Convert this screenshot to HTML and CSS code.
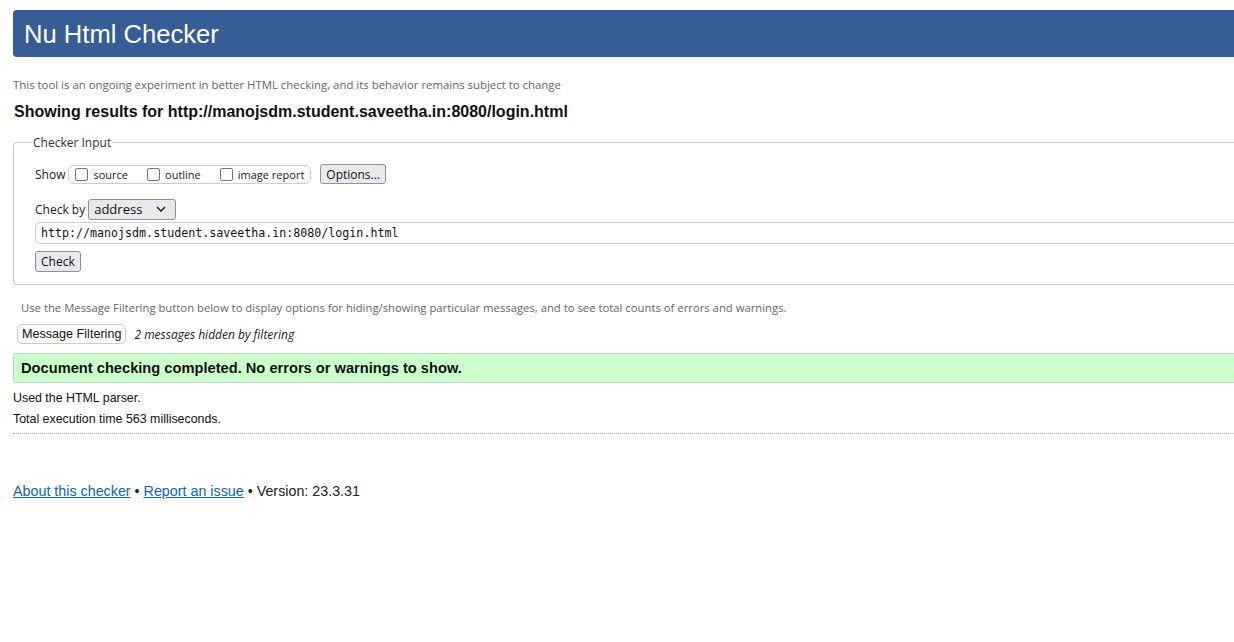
FILE: index.html
```html
<!DOCTYPE html>
<html lang="en">
<head>
<meta charset="utf-8">
<title>Nu Html Checker</title>
<link rel="stylesheet" href="styles.css">
</head>
<body>
<div class="page">
  <h1 class="header">Nu Html Checker</h1>
  <p class="intro">This tool is an ongoing experiment in better HTML checking, and its behavior remains subject to change</p>
  <h2 class="results">Showing results for http://manojsdm.student.saveetha.in:8080/login.html</h2>

  <fieldset class="input-set">
    <legend>Checker Input</legend>
    <div class="row show-row">
      <span class="label">Show</span>
      <span class="group">
        <label class="opt"><span class="cb"></span>source</label>
        <label class="opt"><span class="cb"></span>outline</label>
        <label class="opt"><span class="cb"></span>image report</label>
      </span>
      <span class="btn">Options...</span>
    </div>
    <div class="row checkby-row">
      <span class="label">Check by</span>
      <span class="select">address
        <svg class="chev" width="10" height="6" viewBox="0 0 10 6"><path d="M1 1 L5 5 L9 1" fill="none" stroke="#222" stroke-width="1.5"/></svg>
      </span>
    </div>
    <div class="url">http://manojsdm.student.saveetha.in:8080/login.html</div>
    <span class="btn check">Check</span>
  </fieldset>

  <p class="filter-note">Use the Message Filtering button below to display options for hiding/showing particular messages, and to see total counts of errors and warnings.</p>
  <div class="filter-row">
    <span class="filter-btn">Message Filtering</span>
    <em class="hidden-note">2 messages hidden by filtering</em>
  </div>

  <div class="success">Document checking completed. No errors or warnings to show.</div>
  <p class="stat first">Used the HTML parser.</p>
  <p class="stat">Total execution time 563 milliseconds.</p>
  <hr class="dots">

  <p class="footer"><a href="#">About this checker</a> • <a href="#">Report an issue</a> • Version: 23.3.31</p>
</div>
</body>
</html>
```
FILE: styles.css
```css
html { overflow: hidden; }
body {
  margin: 0;
  padding: 10px 0 0 13px;
  font-family: "Liberation Sans", Arial, sans-serif;
  color: #111;
  background: #fff;
}
.page { width: 1240px; }
.header {
  margin: 0;
  height: 47px;
  box-sizing: border-box;
  background: #365d95;
  color: #fff;
  font-weight: normal;
  font-size: 25.6px;
  line-height: 45px;
  padding: 2px 0 0 11px;
  border-radius: 4px 0 0 4px;
}
.intro {
  margin: 20px 0 0 0;
  font-family: "Open Sans", "Noto Sans", sans-serif;
  font-size: 11.4px;
  line-height: 16px;
  color: #666;
}
.results {
  margin: 9px 0 0 1px;
  font-size: 16px;
  line-height: 20px;
  font-weight: bold;
  color: #111;
}
.input-set {
  margin: 12px 0 0 0;
  border: 1px solid #ccc;
  border-right: none;
  border-radius: 4px 0 0 4px;
  padding: 5px 0 12px 21px;
  font-family: "Open Sans", "Noto Sans", sans-serif;
  font-size: 12px;
}
.input-set legend {
  padding: 0 1px;
  margin-left: -3px;
  color: #333;
  font-size: 12px;
}
.row { display: flex; align-items: center; }
.label { color: #222; margin-right: 3px; }
.show-row { height: 22px; margin-top: 7px; }
.group {
  display: inline-flex;
  align-items: center;
  height: 19px;
  box-sizing: border-box;
  border: 1px solid #ccc;
  border-radius: 6px;
  padding: 0 6px 0 6px;
  margin-right: 9px;
  font-size: 11px;
}
.opt { display: inline-flex; align-items: center; margin-right: 19px; color: #222; }
.opt:last-child { margin-right: 0; }
.cb {
  width: 11px;
  height: 11px;
  border: 1px solid #767676;
  border-radius: 2px;
  margin-right: 5px;
  background: #fff;
}
.btn {
  display: inline-flex;
  align-items: center;
  justify-content: center;
  height: 20px;
  box-sizing: border-box;
  padding: 0 5px;
  border: 1px solid #8f8f9d;
  border-radius: 3px;
  background: #e9e9ed;
  color: #111;
  font-size: 12px;
}
.checkby-row { margin-top: 13px; height: 22px; }
.select {
  display: inline-flex;
  align-items: center;
  justify-content: space-between;
  width: 88px;
  height: 21px;
  box-sizing: border-box;
  border: 1px solid #8f8f9d;
  border-radius: 3px;
  background: #e9e9ed;
  padding: 0 9px 0 5px;
  font-size: 13px;
  color: #111;
}
.url {
  margin-top: 2px;
  height: 22px;
  box-sizing: border-box;
  border: 1px solid #ccc;
  border-right: none;
  border-radius: 5px 0 0 5px;
  padding-left: 5px;
  font-family: "DejaVu Sans Mono", "Liberation Mono", monospace;
  font-size: 11.65px;
  line-height: 20px;
  color: #111;
}
.check { margin-top: 7px; height: 21px; }
.filter-note {
  margin: 15px 0 0 8px;
  font-family: "Open Sans", "Noto Sans", sans-serif;
  font-size: 11.3px;
  line-height: 16px;
  color: #666;
}
.filter-row {
  display: flex;
  align-items: center;
  margin: 8px 0 0 4px;
  height: 20px;
}
.filter-btn {
  display: inline-flex;
  align-items: center;
  height: 20px;
  box-sizing: border-box;
  padding: 0 4px;
  border: 1px solid #ccc;
  border-radius: 5px;
  font-size: 12.6px;
  color: #111;
}
.hidden-note {
  margin-left: 8px;
  font-family: "Open Sans", "Noto Sans", sans-serif;
  font-size: 12px;
  color: #222;
}
.success {
  margin-top: 9px;
  height: 30px;
  box-sizing: border-box;
  background: #ccffcc;
  border: 1px solid #ccc;
  border-right: none;
  border-radius: 3px 0 0 3px;
  padding-left: 7px;
  font-weight: bold;
  font-size: 14.67px;
  line-height: 28px;
  color: #111;
}
.stat {
  margin: 0;
  font-size: 12.4px;
  line-height: 21px;
  color: #111;
}
.stat.first { margin-top: 5px; }
.dots {
  margin: 3px 0 0 0;
  border: none;
  border-top: 1px dotted #aaa;
  height: 0;
}
.footer {
  margin: 49px 0 0 0;
  font-size: 14.3px;
  line-height: 16px;
  color: #222;
}
.footer a { color: #0a62c9; }
```
